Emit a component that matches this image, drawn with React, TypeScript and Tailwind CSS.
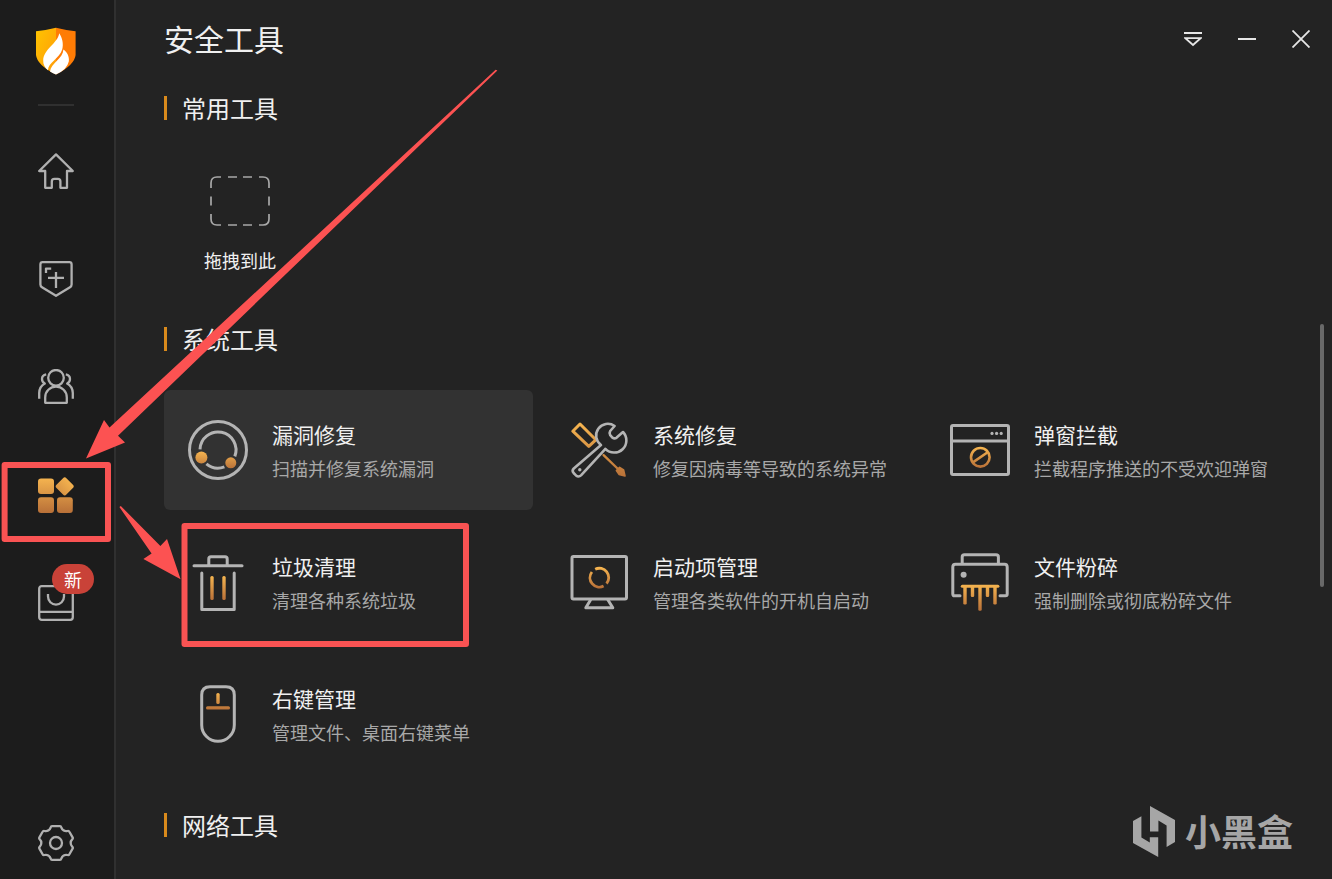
import React, { useState } from "react";

interface Tool {
  id: string;
  title: string;
  description: string;
  icon: React.ReactNode;
}

interface NavItem {
  id: string;
  label: string;
  icon: React.ReactNode;
  badge?: string;
}

const Gradient: React.FC<{ id: string; y1: number; y2: number }> = ({
  id,
  y1,
  y2,
}) => (
  <defs>
    <linearGradient
      id={id}
      gradientUnits="userSpaceOnUse"
      x1="0"
      y1={y1}
      x2="0"
      y2={y2}
    >
      <stop offset="0" stopColor="#f7b650" />
      <stop offset="1" stopColor="#b87038" />
    </linearGradient>
  </defs>
);

const ToolIcon: React.FC<{ children: React.ReactNode }> = ({ children }) => (
  <svg
    className="size-[60px] shrink-0"
    viewBox="0 0 60 60"
    fill="none"
    stroke="#b4b4b4"
    strokeWidth="3"
    strokeLinecap="round"
    strokeLinejoin="round"
    aria-hidden="true"
  >
    {children}
  </svg>
);

const NavIcon: React.FC<{ children: React.ReactNode }> = ({ children }) => (
  <svg
    className="size-9"
    viewBox="0 0 36 36"
    fill="none"
    stroke="#b0b0b0"
    strokeWidth="2.3"
    strokeLinejoin="round"
    aria-hidden="true"
  >
    {children}
  </svg>
);

const tools: Tool[] = [
  {
    id: "leak",
    title: "漏洞修复",
    description: "扫描并修复系统漏洞",
    icon: (
      <ToolIcon>
        <Gradient id="leak" y1={31} y2={49} />
        <circle cx="30" cy="30" r="28.5" />
        <g strokeLinecap="butt">
          <path d="M12 29.4A18 18 0 1 1 46.8 36.4" />
          <path d="M36.4 46.8A18 18 0 0 1 18.4 43.8" />
        </g>
        <circle cx="13.4" cy="37.4" r="6" fill="url(#leak)" stroke="none" />
        <circle cx="42.8" cy="42.8" r="5.5" fill="url(#leak)" stroke="none" />
      </ToolIcon>
    ),
  },
  {
    id: "repair",
    title: "系统修复",
    description: "修复因病毒等导致的系统异常",
    icon: (
      <ToolIcon>
        <Gradient id="repair" y1={2} y2={58} />
        <g stroke="url(#repair)">
          <path d="M3.8 11.2 11 4 26.8 19.8 19.8 26.4Z" />
          <path d="M34.6 35.2 49 49" strokeWidth="2.4" />
          <path
            d="M50.6 47.4 54.6 50 56 56 50 54.4 47.4 50.6Z"
            fill="url(#repair)"
            strokeWidth="1.6"
          />
        </g>
        <path
          d="M32 25A11.2 11.2 0 0 1 45.6 6L41.2 11Q40 13 41.2 15.2L43.4 17.6Q45.4 19 47.4 17.8L54 12A11.2 11.2 0 0 1 36.4 28.8L12 55.4Q9.6 57.6 7 55.4L4.6 53Q2.6 50.8 4.8 48.4Z"
          strokeWidth="2.6"
        />
        <circle cx="10.8" cy="49.8" r="1.7" fill="#b4b4b4" stroke="none" />
      </ToolIcon>
    ),
  },
  {
    id: "popup",
    title: "弹窗拦截",
    description: "拦截程序推送的不受欢迎弹窗",
    icon: (
      <ToolIcon>
        <Gradient id="popup" y1={27} y2={48} />
        <rect x="1.5" y="5.5" width="57" height="49" rx="1.5" />
        <path d="M2 21H58" />
        <g fill="#b4b4b4" stroke="none">
          <circle cx="42" cy="13.4" r="1.6" />
          <circle cx="46.6" cy="13.4" r="1.6" />
          <circle cx="51.2" cy="13.4" r="1.6" />
        </g>
        <g stroke="url(#popup)" strokeWidth="2.6">
          <circle cx="30.3" cy="37.3" r="9.3" />
          <path d="M24 41.6 36.6 33" />
        </g>
      </ToolIcon>
    ),
  },
  {
    id: "trash",
    title: "垃圾清理",
    description: "清理各种系统垃圾",
    icon: (
      <ToolIcon>
        <Gradient id="trash" y1={24} y2={48} />
        <path d="M6 13.8H54" />
        <path d="M20.8 13V7Q20.8 4.8 23 4.8H37Q39.2 4.8 39.2 7V13" />
        <path d="M13.8 21V57.4H46.2V21" />
        <g fill="url(#trash)" stroke="none">
          <rect x="22.3" y="24" width="3.4" height="24" rx="1.5" />
          <rect x="34.3" y="24" width="3.4" height="24" rx="1.5" />
        </g>
      </ToolIcon>
    ),
  },
  {
    id: "startup",
    title: "启动项管理",
    description: "管理各类软件的开机自启动",
    icon: (
      <ToolIcon>
        <Gradient id="startup" y1={15} y2={36} />
        <rect x="3" y="4.5" width="54.5" height="42.5" rx="1.5" />
        <path d="M21.5 48 16.8 55.7H43.8L39 48" />
        <g stroke="url(#startup)" strokeWidth="2.8" strokeLinecap="butt">
          <path d="M26.2 17.2A9.4 9.4 0 0 1 37.6 31.6" />
          <path d="M34.6 34.1A9.4 9.4 0 0 1 22.9 20" />
        </g>
      </ToolIcon>
    ),
  },
  {
    id: "shred",
    title: "文件粉碎",
    description: "强制删除或彻底粉碎文件",
    icon: (
      <ToolIcon>
        <Gradient id="shred" y1={32} y2={59} />
        <path d="M12.2 11V5Q12.2 2.8 14.4 2.8H46Q48.4 2.8 48.4 5V11" />
        <path d="M10 43.8H4.5Q2.8 43.8 2.8 42V15Q2.8 12.2 5.5 12.2H54.5Q57.2 12.2 57.2 15V42Q57.2 43.8 55.5 43.8H50" />
        <circle cx="13.6" cy="22.7" r="3" fill="#b4b4b4" stroke="none" />
        <g fill="url(#shred)" stroke="none">
          <rect x="10.8" y="32.8" width="38.6" height="3" rx="1.5" />
          <rect x="13.3" y="34" width="3.4" height="18.4" rx="1.2" />
          <rect x="20.8" y="34" width="3.4" height="11" rx="1.2" />
          <rect x="28.3" y="34" width="3.4" height="24.8" rx="1.2" />
          <rect x="35.8" y="34" width="3.4" height="11" rx="1.2" />
          <rect x="43.3" y="34" width="3.4" height="18.4" rx="1.2" />
        </g>
      </ToolIcon>
    ),
  },
  {
    id: "mouse",
    title: "右键管理",
    description: "管理文件、桌面右键菜单",
    icon: (
      <ToolIcon>
        <Gradient id="mouse" y1={8} y2={26} />
        <path d="M22 2.8H38Q46.3 2.8 46.3 11V41A16.3 16.3 0 0 1 13.7 41V11Q13.7 2.8 22 2.8Z" />
        <g fill="url(#mouse)" stroke="none">
          <rect x="28.3" y="9" width="3.4" height="11" rx="1.5" />
          <rect x="18" y="22.2" width="24" height="3.2" rx="1.5" />
        </g>
      </ToolIcon>
    ),
  },
];

const navItems: NavItem[] = [
  {
    id: "home",
    label: "首页",
    icon: (
      <NavIcon>
        <path d="M18 1.4 1.2 18H7.2V34.8H13.8V28.4Q13.8 25.8 16.4 25.8H19.8Q22.4 25.8 22.4 28.4V34.8H29V18H34.8Z" />
      </NavIcon>
    ),
  },
  {
    id: "protect",
    label: "防护中心",
    icon: (
      <NavIcon>
        <path d="M4.6 1.2H31.4Q33.6 1.2 33.6 3.4V23.4Q33.6 25.2 32 26.2L18 34.8 4 26.2Q2.4 25.2 2.4 23.4V3.4Q2.4 1.2 4.6 1.2Z" />
        <path d="M10 16.8H26M18 11V27" />
        <path d="M8 12V7.6H13.2" />
      </NavIcon>
    ),
  },
  {
    id: "access",
    label: "访问控制",
    icon: (
      <NavIcon>
        <circle cx="18" cy="8.8" r="7.8" />
        <path d="M7.2 33.8V28.4A10.8 10.8 0 0 1 28.8 28.4V33.8Z" />
        <path d="M8.2 5.4Q4 6.2 4 10 4 13 6.8 14.6 1.4 17.6 1.2 24V29.8" />
        <path d="M27.8 5.4Q32 6.2 32 10 32 13 29.2 14.6 34.6 17.6 34.8 24V29.8" />
      </NavIcon>
    ),
  },
  {
    id: "tools",
    label: "安全工具",
    icon: (
      <NavIcon>
        <Gradient id="nav-tools" y1={0} y2={36} />
        <g fill="url(#nav-tools)" stroke="none">
          <rect x="0" y="1.5" width="16" height="15.6" rx="3" />
          <rect
            x="19.7"
            y="2.4"
            width="14"
            height="14"
            rx="2.4"
            transform="rotate(45 26.7 9.4)"
          />
          <rect x="0" y="20.2" width="16" height="15.8" rx="3" />
          <rect x="19" y="20.2" width="15.8" height="15.8" rx="3" />
        </g>
      </NavIcon>
    ),
  },
  {
    id: "store",
    label: "应用商店",
    badge: "新",
    icon: (
      <NavIcon>
        <rect x="1.2" y="1.2" width="33.6" height="33.6" rx="2.5" />
        <path d="M1 26.8H35" />
        <path d="M10 9V11.6A8 8 0 0 0 26 11.6V9" />
      </NavIcon>
    ),
  },
];

const SectionTitle: React.FC<{ children: React.ReactNode }> = ({
  children,
}) => (
  <h2 className="flex h-9 items-center gap-[15px] text-2xl">
    <span className="h-6 w-[3px] bg-[#d98a1c]" />
    {children}
  </h2>
);

const Logo = () => (
  <svg className="h-12 w-10" viewBox="0 0 40 48" aria-hidden="true">
    <defs>
      <linearGradient id="logo-left" x1="0" y1="0" x2="1" y2="1">
        <stop offset="0" stopColor="#ffc400" />
        <stop offset="1" stopColor="#ff9a0a" />
      </linearGradient>
    </defs>
    <path d="M20 .8Q10 3.4 0 4.2V28Q1 38 20 47.6Z" fill="url(#logo-left)" />
    <path d="M20 .8Q30 3.4 39.6 4.2V28Q38.6 38 20 47.6Z" fill="#ff7c05" />
    <path
      d="M23.2 6.2C22 16 7.6 22 7.2 33.2 7 37.4 8.8 40.6 12 43.2 12 36 23.4 31.6 26.2 22.6 27.8 16.6 26.2 10.4 23.2 6.2Z"
      fill="#fff"
    />
    <path
      d="M27.4 22.4C27 32 15 35.4 14 44.6Q17 46.6 20 47.4 31 42.6 32.8 34.4C33.6 29.4 31 25 27.4 22.4Z"
      fill="#fff"
    />
  </svg>
);

const WindowControls = () => (
  <div className="flex">
    <button className="flex h-[54px] w-[54px] items-center justify-center" aria-label="菜单">
      <svg className="size-[18px]" viewBox="0 0 18 18" fill="none" stroke="#e6e6e6" strokeWidth="1.8">
        <path d="M0 3H18M1.4 8.2H16.6L9 15Z" />
      </svg>
    </button>
    <button className="flex h-[54px] w-[54px] items-center justify-center" aria-label="最小化">
      <svg className="size-[18px]" viewBox="0 0 18 18" stroke="#e6e6e6" strokeWidth="2">
        <path d="M0 9H18" />
      </svg>
    </button>
    <button className="flex h-[54px] w-[54px] items-center justify-center" aria-label="关闭">
      <svg className="size-[18px]" viewBox="0 0 18 18" stroke="#e6e6e6" strokeWidth="1.8">
        <path d="M.5.5 17.5 17.5M17.5.5.5 17.5" />
      </svg>
    </button>
  </div>
);

// Red frames and arrows that walk the reader through the steps
const Annotations = () => (
  <svg
    className="pointer-events-none absolute left-0 top-0"
    width="500"
    height="660"
    viewBox="0 0 500 660"
    fill="none"
    aria-hidden="true"
  >
    <g stroke="#f95353" strokeWidth="6" strokeLinejoin="round">
      <rect x="4.6" y="465" width="103.4" height="74" />
      <rect x="184.5" y="526" width="281.5" height="118" />
    </g>
    <g fill="#fc5252">
      <path d="M497.4 70.6 495.6 69.8 109.5 427.5 104 420 86 458.6 125 442.6 118 435.7Z" />
      <path d="M119.4 507 120.8 506 160.4 546 167 539 180.6 579.2 143.4 559 151.6 553.4Z" />
    </g>
  </svg>
);

const App: React.FC = () => {
  const [page, setPage] = useState("tools");
  const [activeTool, setActiveTool] = useState("leak");

  return (
    <div className="relative flex min-h-screen bg-[#232323] font-['Noto_Sans_CJK_SC',sans-serif] text-[#f0f0f0]">
      <aside className="flex w-[116px] shrink-0 flex-col items-center border-r-2 border-[#303030] bg-[#1c1c1c] pr-[2px]">
        <div className="flex h-[117px] flex-col items-center pt-[27px]">
          <Logo />
          <div className="mt-[29px] h-[2px] w-9 bg-[#303030]" />
        </div>
        <nav className="flex flex-col">
          {navItems.map(({ id, label, icon, badge }) => (
            <button
              key={id}
              onClick={() => setPage(id)}
              className="relative flex h-[108px] w-[112px] items-center justify-center"
              aria-label={label}
              aria-current={page === id ? "page" : undefined}
            >
              {icon}
              {badge && (
                <span className="absolute left-[52px] top-[15px] flex h-[30px] w-[42px] items-center justify-center rounded-full bg-[#c94238] text-lg text-white">
                  {badge}
                </span>
              )}
            </button>
          ))}
        </nav>
        <button
          className="mt-auto flex h-[72px] w-[112px] items-center justify-center"
          aria-label="设置"
        >
          <NavIcon>
            <path d="M14 1.2H22Q23 1.2 23.4 2.6A5 5 0 0 0 29.4 6Q30.8 5.6 31.4 6.8L34.6 12.4Q35.2 13.4 34.2 14.4A5 5 0 0 0 34.2 21.6Q35.2 22.6 34.6 23.6L31.4 29.2Q30.8 30.4 29.4 30A5 5 0 0 0 23.4 33.4Q23 34.8 22 34.8H14Q13 34.8 12.6 33.4A5 5 0 0 0 6.6 30Q5.2 30.4 4.6 29.2L1.4 23.6Q.8 22.6 1.8 21.6A5 5 0 0 0 1.8 14.4Q.8 13.4 1.4 12.4L4.6 6.8Q5.2 5.6 6.6 6A5 5 0 0 0 12.6 2.6Q13 1.2 14 1.2Z" />
            <circle cx="18" cy="18" r="6" />
          </NavIcon>
        </button>
      </aside>

      <main className="min-w-0 flex-1 pl-12">
        <header className="flex h-[78px] items-center justify-between pr-1">
          <h1 className="pb-0.5 text-[30px] leading-10">安全工具</h1>
          <WindowControls />
        </header>

        <div className="pr-[37px] pt-3">
          <SectionTitle>常用工具</SectionTitle>
          <div className="mt-[50px] flex w-[152px] flex-col items-center">
            <svg
              width="60"
              height="50"
              viewBox="0 0 60 50"
              fill="none"
              stroke="#a8a8a8"
              strokeWidth="1.7"
              aria-hidden="true"
            >
              <path d="M1 12V7Q1 1 7 1H11M49 1H53Q59 1 59 7V12M59 38V43Q59 49 53 49H49M11 49H7Q1 49 1 43V38" />
              <path d="M18 1H27M33 1H42M18 49H27M33 49H42M1 20.5V29.5M59 20.5V29.5" />
            </svg>
            <p className="mt-5 text-lg leading-7">拖拽到此</p>
          </div>

          <div className="mt-[47px]">
            <SectionTitle>系统工具</SectionTitle>
            <div className="mt-[33px] grid grid-cols-3 gap-3">
              {tools.map(({ id, title, description, icon }) => (
                <button
                  key={id}
                  onClick={() => setActiveTool(id)}
                  className={`flex h-[120px] items-center gap-6 rounded-md pl-6 text-left ${
                    activeTool === id ? "bg-[#323232]" : "hover:bg-[#2b2b2b]"
                  }`}
                >
                  {icon}
                  <span className="flex flex-col whitespace-nowrap pt-0.5 leading-[34px]">
                    <span className="text-[21px]">{title}</span>
                    <span className="text-lg leading-[34px] text-[#a8a8a8]">
                      {description}
                    </span>
                  </span>
                </button>
              ))}
            </div>
          </div>

          <div className="mt-[33px] pb-8">
            <SectionTitle>网络工具</SectionTitle>
          </div>
        </div>
      </main>

      <div className="absolute right-2 top-[324px] h-[263px] w-1 rounded-full bg-[#686868]" />

      <div className="absolute bottom-[22px] right-[39px] flex items-center gap-[10px] text-[#a6a6a6]">
        <svg className="h-[51px] w-[42px]" viewBox="0 0 42 51" fill="currentColor" aria-hidden="true">
          <path d="M0 15 8.4 10.2V31.6L16.8 36.6V31.2H25.2V51L0 37Z" />
          <path d="M17 0 42 14V36L33.6 41V19.4L25.4 14.4V25.6H17Z" />
        </svg>
        <span className="pb-1 text-4xl font-bold leading-[46px]">小黑盒</span>
      </div>

      <Annotations />
    </div>
  );
};

export default App;
